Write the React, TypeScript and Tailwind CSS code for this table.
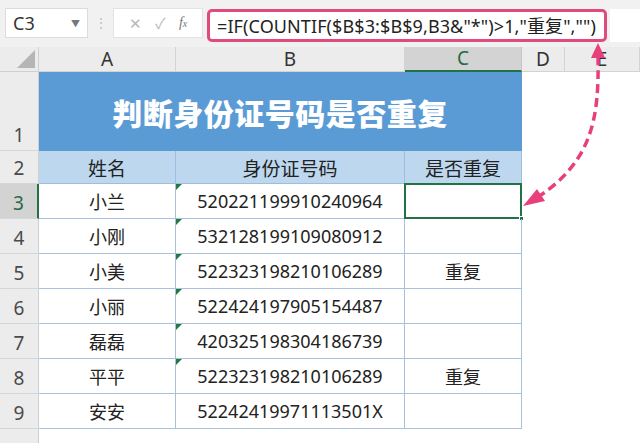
import React from "react";

const FONT = { fontFamily: '"Noto Sans", "Noto Sans CJK SC", sans-serif' };
const CJK = { fontFamily: '"Noto Sans CJK SC", "Noto Sans", sans-serif' };

const rows = [
  { name: "小兰", id: "520221199910240964", dup: "", tri: true },
  { name: "小刚", id: "532128199109080912", dup: "", tri: true },
  { name: "小美", id: "522323198210106289", dup: "重复", tri: true },
  { name: "小丽", id: "522424197905154487", dup: "", tri: true },
  { name: "磊磊", id: "420325198304186739", dup: "", tri: true },
  { name: "平平", id: "522323198210106289", dup: "重复", tri: true },
  { name: "安安", id: "52242419971113501X", dup: "", tri: false },
];

const gridCols = "grid grid-cols-[39px_137px_229px_117px_43px_1fr]";

function RowHead({ n, h, sel }: { n?: number; h: string; sel?: boolean }) {
  return (
    <div
      className={`${h} flex items-end justify-center text-[19px] leading-none border-b border-[#d6d6d6] ${
        sel
          ? "bg-[#d3d3d3] text-[#1e6b41] border-r-2 border-r-[#217346]"
          : "bg-[#ececec] text-[#4a4a4a] border-r border-r-[#cfcfcf]"
      }`}
      style={FONT}
    >
      {n !== undefined && <span className="pb-[5px]">{n}</span>}
    </div>
  );
}

export default function App() {
  return (
    <div className="relative w-[640px] h-[443px] overflow-hidden bg-white" style={FONT}>
      {/* formula bar */}
      <div className="h-[47px] bg-[#f1f1f1] flex items-start pt-[8px]">
        <div className="ml-[5px] w-[83px] h-[30px] bg-white border border-[#dcdcdc] flex items-center justify-between px-[7px]">
          <span className="text-[18px] text-[#333] leading-none">C3</span>
          <span className="text-[9px] text-[#777] leading-none">▼</span>
        </div>
        <div className="w-[25px] h-[30px] flex items-center justify-center text-[#bbb] text-[12px]">⋮</div>
        <div className="w-[90px] h-[30px] bg-white border border-[#e3e3e3] flex items-center justify-around px-[8px] text-[#b8b8b8]">
          <span className="text-[15px] leading-none">✕</span>
          <span className="text-[15px] leading-none">✓</span>
          <span className="text-[14px] italic leading-none text-[#777]" style={{ fontFamily: '"Liberation Serif", serif' }}>
            f<span className="text-[10px]">x</span>
          </span>
        </div>
        <div className="ml-[4px] mt-[1px] w-[400px] h-[33px] bg-white border-[3px] border-[#e04a7c] rounded-[5px] flex items-center pl-[7px]">
          <span className="text-[18px] text-[#222] leading-none whitespace-nowrap tracking-[0.1px]" style={FONT}>
            =IF(COUNTIF($B$3:$B$9,B3&amp;"*")&gt;1,"重复","")
          </span>
        </div>
        <div className="flex-1 h-[33px] mt-[1px] ml-[3px] bg-white" />
      </div>

      {/* column headers */}
      <div className={`${gridCols} h-[25px]`}>
        <div className="bg-[#ececec] border-r border-b border-[#cfcfcf] relative">
          <svg className="absolute right-[3px] bottom-[3px]" width="18" height="18" viewBox="0 0 18 18">
            <polygon points="18,0 18,18 0,18" fill="#b5b5b5" />
          </svg>
        </div>
        {["A", "B"].map((c) => (
          <div key={c} className="bg-[#ececec] border-r border-b border-[#d3d3d3] flex items-center justify-center text-[19px] text-[#333] leading-none">
            {c}
          </div>
        ))}
        <div className="bg-[#d3d3d3] border-r border-[#c6c6c6] border-b-2 border-b-[#217346] flex items-center justify-center text-[19px] text-[#1e6b41] leading-none">
          C
        </div>
        {["D", "E"].map((c) => (
          <div key={c} className="bg-[#ececec] border-r border-b border-[#d3d3d3] flex items-center justify-center text-[19px] text-[#333] leading-none">
            {c}
          </div>
        ))}
      </div>

      {/* row 1 */}
      <div className={`${gridCols}`}>
        <RowHead n={1} h="h-[79px]" />
        <div className="col-span-3 h-[79px] bg-[#5b9bd5] border-r border-[#5b9bd5] flex items-center justify-center">
          <span className="text-[30px] font-black text-white leading-none tracking-[0.5px]" style={CJK}>
            判断身份证号码是否重复
          </span>
        </div>
        <div />
        <div />
      </div>

      {/* row 2 */}
      <div className={`${gridCols}`}>
        <RowHead n={2} h="h-[33px]" />
        {["姓名", "身份证号码", "是否重复"].map((t) => (
          <div key={t} className="h-[33px] bg-[#bdd7ee] border-r border-b border-[#9fbddc] flex items-center justify-center text-[19px] text-[#222] leading-none" style={CJK}>
            {t}
          </div>
        ))}
        <div />
        <div />
      </div>

      {/* data rows */}
      {rows.map((r, i) => (
        <div key={i} className={`${gridCols}`}>
          <RowHead n={i + 3} h="h-[35px]" sel={i === 0} />
          <div className="h-[35px] border-r border-b border-[#a9c1dc] flex items-center justify-center text-[18px] text-[#222] leading-none" style={CJK}>
            {r.name}
          </div>
          <div className="relative h-[35px] border-r border-b border-[#a9c1dc] flex items-center justify-center text-[18px] text-[#222] leading-none" style={FONT}>
            {r.tri && (
              <svg className="absolute left-0 top-0" width="6" height="6" viewBox="0 0 6 6">
                <polygon points="0,0 6,0 0,6" fill="#1f7a45" />
              </svg>
            )}
            {r.id}
          </div>
          <div className="relative h-[35px] border-r border-b border-[#a9c1dc] flex items-center justify-center text-[18px] text-[#222] leading-none" style={CJK}>
            {r.dup}
            {i === 0 && (
              <>
                <div className="absolute -left-[1px] -top-[1px] -right-[1px] -bottom-[1px] border-2 border-[#217346]" />
                <div className="absolute -right-[3px] -bottom-[3px] w-[5px] h-[5px] bg-[#217346] border border-white" />
              </>
            )}
          </div>
          <div />
          <div />
        </div>
      ))}

      {/* row 10 (partially visible) */}
      <div className={`${gridCols}`}>
        <RowHead h="h-[40px]" />
      </div>

      {/* dashed arrow overlay */}
      <svg className="absolute left-0 top-0 pointer-events-none" width="640" height="443" viewBox="0 0 640 443">
        <path
          d="M598 56 C 599 115, 594 160, 538 197"
          fill="none"
          stroke="#e8407a"
          strokeWidth="3.5"
          strokeDasharray="9 5"
        />
        <polygon points="598,43 591,58 605,58" fill="#e8407a" />
        <polygon points="523,206 537,189 545,201" fill="#e8407a" />
      </svg>
    </div>
  );
}
